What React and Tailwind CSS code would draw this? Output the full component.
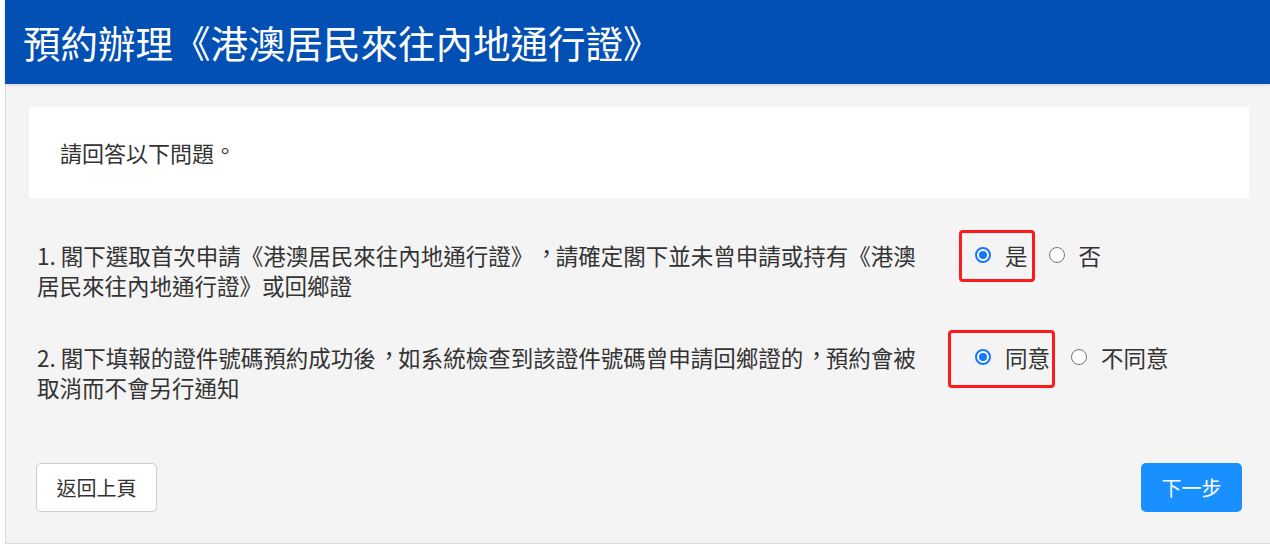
import React, { useState } from 'react';

const font = { fontFamily: '"Noto Sans CJK TC", "Noto Sans", sans-serif' };

// centred punctuation, as in the reference's Traditional Chinese font
function P({ children, className = 'translate-x-[2px] -translate-y-[3px]' }) {
  return <span className={`inline-block ${className}`}>{children}</span>;
}

function Radio({ checked }) {
  return checked ? (
    <span className="w-4 h-4 rounded-full border-2 border-[#1677ff] bg-white flex items-center justify-center shrink-0">
      <span className="w-2 h-2 rounded-full bg-[#1677ff]" />
    </span>
  ) : (
    <span className="w-4 h-4 rounded-full border border-[#767676] bg-white shrink-0" />
  );
}

function Option({ label, checked, onClick }) {
  return (
    <button type="button" onClick={onClick} className="flex items-center gap-[14px] text-[22.5px] leading-[30px] text-[#333]">
      <Radio checked={checked} />
      <span>{label}</span>
    </button>
  );
}

export default function App() {
  const [q1, setQ1] = useState('yes');
  const [q2, setQ2] = useState('agree');

  return (
    <div lang="zh-TW" className="w-[1270px] h-[550px] bg-white overflow-hidden [text-spacing-trim:space-all]" style={font}>
      <div className="ml-[5px] w-[1265px]">
        <header className="h-[84px] bg-[#0350b5] flex items-center pl-[18px] shadow-[0_1px_3px_rgba(0,0,0,0.15)] relative z-10">
          <h1 className="text-[37.5px] text-white leading-none">預約辦理《港澳居民來往內地通行證》</h1>
        </header>

        <main className="bg-[#f4f4f4] border-l border-b border-[#dcdcdc] pl-[23px] pr-[21px] pt-[23px] h-[460px]">
          <div className="bg-white h-[91px] flex items-center pl-[31px] text-[22px] text-[#333]">
            請回答以下問題<P className="-translate-y-[3px]">。</P>
          </div>

          <div className="px-[8px] pt-[42px] flex flex-col gap-[42px]">
            <div className="flex items-start">
              <p className="w-[890px] text-[22.5px] leading-[30px] text-[#333]">
                1. 閣下選取首次申請《港澳居民來往內地通行證》<P>，</P>請確定閣下並未曾申請或持有《港澳居民來往內地通行證》或回鄉證
              </p>
              <div className="relative ml-[48px] flex items-center gap-[21px]">
                <span className="absolute left-[-16px] top-[-10px] w-[76px] h-[52px] border-[3px] border-[#ff1a1a] rounded-[4px] pointer-events-none" />
                <Option label="是" checked={q1 === 'yes'} onClick={() => setQ1('yes')} />
                <Option label="否" checked={q1 === 'no'} onClick={() => setQ1('no')} />
              </div>
            </div>

            <div className="flex items-start">
              <p className="w-[890px] text-[22.5px] leading-[30px] text-[#333]">
                2. 閣下填報的證件號碼預約成功後<P>，</P>如系統檢查到該證件號碼曾申請回鄉證的<P>，</P>預約會被取消而不會另行通知
              </p>
              <div className="relative ml-[48px] flex items-center gap-[21px]">
                <span className="absolute left-[-27px] top-[-12px] w-[107px] h-[58px] border-[3px] border-[#ff1a1a] rounded-[4px] pointer-events-none" />
                <Option label="同意" checked={q2 === 'agree'} onClick={() => setQ2('agree')} />
                <Option label="不同意" checked={q2 === 'disagree'} onClick={() => setQ2('disagree')} />
              </div>
            </div>
          </div>

          <div className="px-[7px] mt-[61px] flex justify-between">
            <button type="button" className="h-[49px] w-[121px] bg-white border border-[#cccccc] rounded-[5px] text-[20px] text-[#333]">
              返回上頁
            </button>
            <button type="button" className="h-[49px] w-[101px] bg-[#1890ff] rounded-[5px] text-[20px] text-white">
              下一步
            </button>
          </div>
        </main>
      </div>
    </div>
  );
}
